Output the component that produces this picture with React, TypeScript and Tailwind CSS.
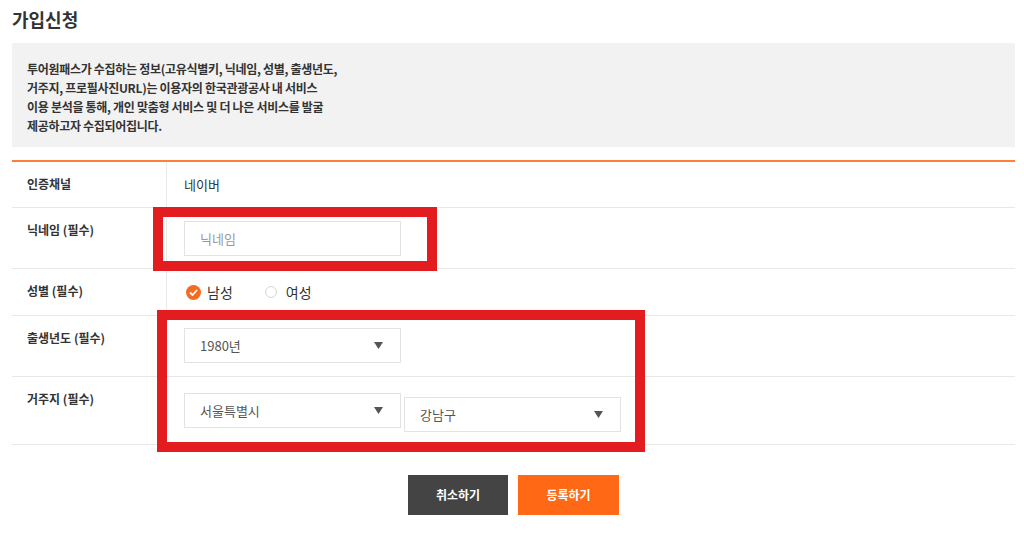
import React from "react"

const font = "font-['Noto_Sans_CJK_KR','Noto_Sans',sans-serif]"

function Arrow() {
  return (
    <svg width="9" height="7" viewBox="0 0 9 7" className="shrink-0">
      <polygon points="0,0 9,0 4.5,7" fill="#555" />
    </svg>
  )
}

function Select({ value, className = "" }: { value: string; className?: string }) {
  return (
    <div
      className={`flex h-[35px] w-[217px] items-center justify-between border border-[#e3e3e3] bg-white pl-[15px] pr-[17px] text-[13px] text-[#555] ${className}`}
    >
      <span>{value}</span>
      <Arrow />
    </div>
  )
}

type RowProps = {
  label: string
  children: React.ReactNode
  h: string
}

function Row({ label, children, h }: RowProps) {
  return (
    <div className={`flex border-b border-[#e8e8e8] ${h}`}>
      <div className="w-[155px] shrink-0 border-r border-[#eaeaea] pl-[15px] pt-[13px] text-[12px] font-bold leading-[18px] text-[#333]">
        {label}
      </div>
      <div className="flex-1 pl-[17px]">{children}</div>
    </div>
  )
}

export default function App() {
  return (
    <div className={`relative h-[533px] w-[1024px] overflow-hidden bg-white ${font}`}>
      <div className="ml-[12px] w-[1003px]">
        <h1 className="pt-[6px] text-[18px] font-bold leading-[26px] text-[#333]">가입신청</h1>

        <div className="mt-[11px] h-[104px] bg-[#f2f2f2] pl-[15px] pt-[16px] text-[12px] font-semibold leading-[19px] tracking-[-0.3px] text-[#333]">
          <p>투어원패스가 수집하는 정보(고유식별키, 닉네임, 성별, 출생년도,</p>
          <p>거주지, 프로필사진URL)는 이용자의 한국관광공사 내 서비스</p>
          <p>이용 분석을 통해, 개인 맞춤형 서비스 및 더 나은 서비스를 발굴</p>
          <p>제공하고자 수집되어집니다.</p>
        </div>

        <div className="mt-[13px] border-t-2 border-[#ff7f3a]">
          <Row label="인증채널" h="h-[46px]">
            <div className="pt-[14px] text-[13px] leading-[18px] text-[#333]">네이버</div>
          </Row>

          <Row label="닉네임 (필수)" h="h-[61px]">
            <div className="pt-[13px]">
              <div className="flex h-[35px] w-[217px] items-center border border-[#e3e3e3] pl-[15px] text-[13px] text-[#999]">
                닉네임
              </div>
            </div>
          </Row>

          <Row label="성별 (필수)" h="h-[47px]">
            <div className="flex items-center pt-[14px] text-[13px] leading-[18px] text-[#333]">
              <span className="ml-[2px] flex h-[15px] w-[15px] items-center justify-center rounded-full bg-[#f26d21]">
                <svg width="9" height="7" viewBox="0 0 9 7">
                  <polyline points="1,3.5 3.5,6 8,1" fill="none" stroke="#fff" strokeWidth="1.8" />
                </svg>
              </span>
              <span className="ml-[6px] text-[14px]">남성</span>
              <span className="ml-[32px] h-[12px] w-[12px] rounded-full border border-[#d5d5d5]" />
              <span className="ml-[9px] text-[14px]">여성</span>
            </div>
          </Row>

          <Row label="출생년도 (필수)" h="h-[61px]">
            <div className="pt-[12px]">
              <Select value="1980년" />
            </div>
          </Row>

          <Row label="거주지 (필수)" h="h-[68px]">
            <div className="flex items-start gap-[3px] pt-[16px]">
              <Select value="서울특별시" />
              <Select value="강남구" className="mt-[4px]" />
            </div>
          </Row>
        </div>

        <div className="mt-[30px] flex justify-center gap-[10px]">
          <button className="h-[40px] w-[100px] bg-[#444] text-[12px] font-bold text-white">취소하기</button>
          <button className="h-[40px] w-[101px] bg-[#ff6915] text-[12px] font-bold text-white">등록하기</button>
        </div>
      </div>

      <div className="absolute left-[153px] top-[207px] h-[64px] w-[284px] border-[10px] border-[#e31d1f]" />
      <div className="absolute left-[157px] top-[310px] h-[142px] w-[488px] border-[10px] border-[#e31d1f]" />
    </div>
  )
}
